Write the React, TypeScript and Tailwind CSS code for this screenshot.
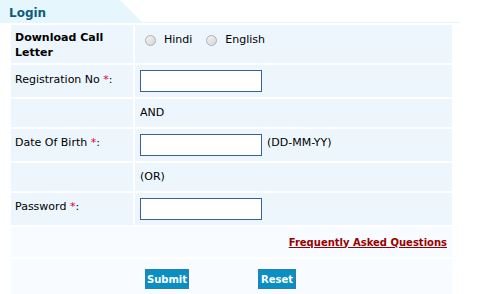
import { useState } from 'react'

const cell = 'bg-[#edf5fd]'

function Radio({ label, checked, onChange }: { label: string; checked: boolean; onChange: () => void }) {
    return (
        <label className="flex items-center gap-[8px] cursor-pointer">
            <span
                onClick={onChange}
                className="w-[11px] h-[11px] rounded-full border border-[#b0b0b0] bg-gradient-to-br from-[#f4f4f4] to-[#d6d6d6] flex items-center justify-center"
            >
                {checked && <span className="w-[5px] h-[5px] rounded-full bg-[#333]" />}
            </span>
            {label}
        </label>
    )
}

function Field() {
    return <input type="text" className="w-[122px] h-[22px] border border-[#3d5f99] bg-white px-1 outline-none" />
}

export default function App() {
    const [lang, setLang] = useState('')

    return (
        <div className="w-[483px] h-[294px] bg-white text-[11px] text-black font-['DejaVu_Sans',Verdana,sans-serif] overflow-hidden">
            {/* Tab header */}
            <div className="relative h-[23px] border-b border-[#e8f4f8] w-[460px]">
                <div className="absolute left-0 top-0 h-[23px] w-[143px] bg-[#e5f7fd] [clip-path:polygon(0_0,120px_0,143px_100%,0_100%)]" />
                <div className="relative pl-[9px] pt-[4px] text-[12px] font-bold text-[#0e5d7a]">Login</div>
            </div>

            {/* Form table */}
            <div className="ml-[11px] mt-[2px] w-[441px] grid grid-cols-[122px_317px] gap-[2px]">
                <div className={`${cell} h-[38px] px-[4px] pt-[5px] font-bold leading-[15px]`}>Download Call Letter</div>
                <div className={`${cell} h-[38px] pl-[10px] pt-[7px] flex items-start gap-[14px]`}>
                    <Radio label="Hindi" checked={lang === 'hi'} onChange={() => setLang('hi')} />
                    <Radio label="English" checked={lang === 'en'} onChange={() => setLang('en')} />
                </div>

                <div className={`${cell} h-[32px] px-[4px] pt-[7px]`}>
                    Registration No <span className="text-[#e00030]">*</span>:
                </div>
                <div className={`${cell} h-[32px] pl-[5px] pt-[5px]`}>
                    <Field />
                </div>

                <div className={`${cell} h-[28px]`} />
                <div className={`${cell} h-[28px] pl-[5px] pt-[6px]`}>AND</div>

                <div className={`${cell} h-[32px] px-[4px] pt-[6px]`}>
                    Date Of Birth <span className="text-[#e00030]">*</span>:
                </div>
                <div className={`${cell} h-[32px] pl-[5px] pt-[5px] flex items-start gap-[5px]`}>
                    <Field />
                    <span className="pt-[1px]">(DD-MM-YY)</span>
                </div>

                <div className={`${cell} h-[28px]`} />
                <div className={`${cell} h-[28px] pl-[5px] pt-[6px]`}>(OR)</div>

                <div className={`${cell} h-[32px] px-[4px] pt-[6px]`}>
                    Password <span className="text-[#e00030]">*</span>:
                </div>
                <div className={`${cell} h-[32px] pl-[5px] pt-[5px]`}>
                    <Field />
                </div>

                <div className="col-span-2 h-[30px] bg-[#f8fbff] flex justify-end items-center pr-[5px]">
                    <a href="#" className="text-[10px] font-bold text-[#990000] underline">Frequently Asked Questions</a>
                </div>

                <div className="col-span-2 h-[36px] bg-[#f8fbff] pl-[134px] pt-[10px] flex items-start gap-[69px]">
                    <button className="h-[20px] w-[44px] bg-[#0a8fc2] border border-[#2a7fb0] text-white text-[10px] font-bold">Submit</button>
                    <button className="h-[20px] w-[38px] bg-[#0a8fc2] border border-[#2a7fb0] text-white text-[10px] font-bold">Reset</button>
                </div>
            </div>
        </div>
    )
}
